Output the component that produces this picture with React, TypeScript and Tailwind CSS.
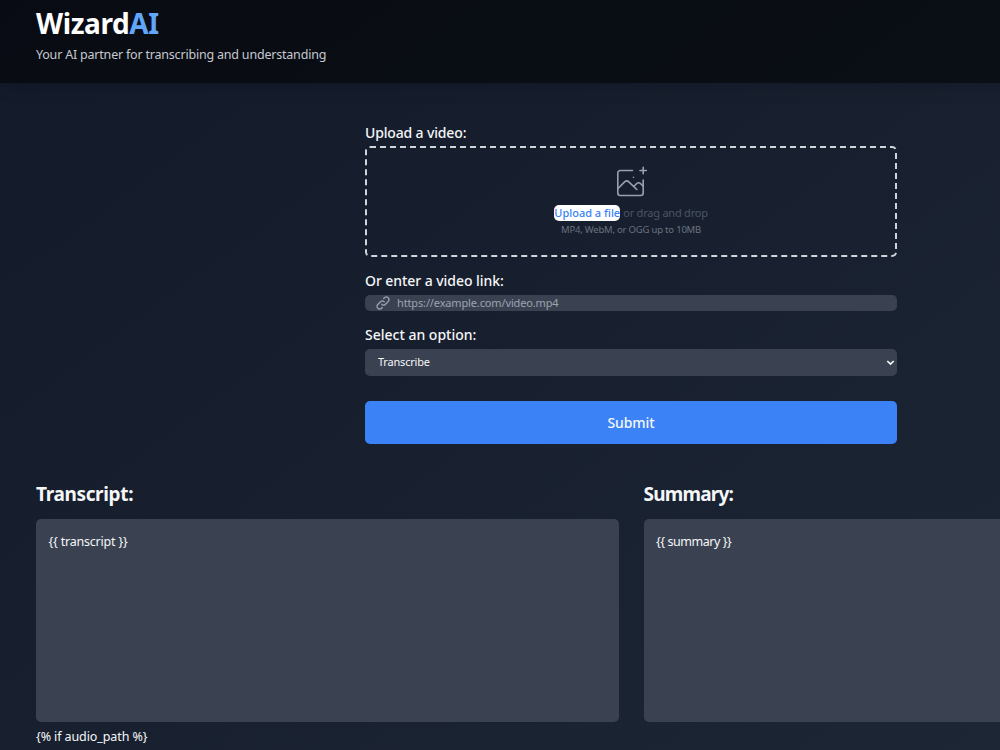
import { useState } from "react";

const ImagePlusIcon: React.FC = () => (
  <svg
    className="h-8 w-8 text-gray-400"
    viewBox="0 0 32 32"
    fill="none"
    stroke="currentColor"
    strokeWidth="1.6"
    strokeLinecap="round"
    strokeLinejoin="round"
  >
    <path d="M17.5 4.5H5.3a2.5 2.5 0 0 0-2.5 2.5v20a2.5 2.5 0 0 0 2.5 2.5h20.4a2.5 2.5 0 0 0 2.5-2.5V14" />
    <path d="M25 4.5h6.4M28.2 1.2v6.6" />
    <path d="M2.8 22.7l6.8-6.8a3 3 0 0 1 4.2 0l8 7.6M19 20.3l2.5-2.5a3 3 0 0 1 4.2 0l2.5 2.5" />
    <path d="M18.5 11.2h.01" />
  </svg>
);

const LinkIcon: React.FC = () => (
  <svg
    className="ml-[10px] h-4 w-4 shrink-0 text-gray-400"
    viewBox="0 0 24 24"
    fill="none"
    stroke="currentColor"
    strokeWidth="2"
    strokeLinecap="round"
    strokeLinejoin="round"
  >
    <path d="M13.828 10.172a4 4 0 00-5.656 0l-4 4a4 4 0 105.656 5.656l1.102-1.101m-.758-4.899a4 4 0 005.656 0l4-4a4 4 0 00-5.656-5.656l-1.1 1.1" />
  </svg>
);

const panels = [
  { title: "Transcript:", body: "{{ transcript }}", titleClass: "tracking-[-0.35px]", bodyClass: "tracking-[-0.2px]" },
  { title: "Summary:", body: "{{ summary }}", titleClass: "tracking-[-0.8px]", bodyClass: "tracking-[-0.45px]" },
];

const App: React.FC = () => {
  const [link, setLink] = useState<string>("");
  const [option, setOption] = useState<string>("transcribe");

  return (
    <div className="h-[750px] w-full overflow-hidden font-['Noto_Sans',sans-serif] text-[#f5f6f8]">
      <div className="h-[950px] w-[1262px] bg-linear-to-br/srgb from-[#131a2a] to-[#1f2937]">
        <header className="h-[83px] bg-black/55 px-9 pt-[6px] shadow-lg">
          <h1 className="text-[28px] leading-[34px] font-bold tracking-[-0.4px] text-white">
            Wizard<span className="text-[#60a5fa]">AI</span>
          </h1>
          <p className="mt-[6px] text-[12.5px] leading-[18px] tracking-[-0.2px] text-[#c5c9d0]">
            Your AI partner for transcribing and understanding
          </p>
        </header>

        <form className="mx-auto mt-[39px] flex w-[532px] flex-col" onSubmit={(e) => e.preventDefault()}>
          <label className="text-[14px] leading-[21px] font-medium tracking-[-0.15px]">Upload a video:</label>
          <div className="mt-[3px] flex h-[111px] flex-col items-center rounded-[5px] border-2 border-dashed border-[#d1d5db] pt-[18px]">
            <ImagePlusIcon />
            <div className="mt-[7px] flex items-center text-[11px] leading-4 text-[#4b5563]">
              <span className="rounded-[5px] bg-white font-medium text-[#3b82f6]">Upload a file</span>
              <p className="pl-[3px] tracking-[-0.22px]">or drag and drop</p>
            </div>
            <p className="mt-[2px] text-[9.5px] leading-[13px] tracking-[-0.2px] text-[#6b7280]">
              MP4, WebM, or OGG up to 10MB
            </p>
          </div>

          <label className="mt-[14px] text-[14px] leading-5 font-medium tracking-[-0.06px]">Or enter a video link:</label>
          <div className="mt-1 flex h-4 items-center rounded-[5px] bg-[#3a4252]">
            <LinkIcon />
            <input
              type="text"
              value={link}
              onChange={(e) => setLink(e.target.value)}
              placeholder="https://example.com/video.mp4"
              className="ml-[6px] h-4 flex-1 bg-transparent text-[11px] leading-4 tracking-[-0.14px] outline-none placeholder:text-[#9ca3af]"
            />
          </div>

          <label className="mt-[14px] text-[14px] leading-5 font-medium">Select an option:</label>
          <div className="mt-1 flex h-[27px] items-center rounded-[5px] bg-[#3a4252] pr-[2px]">
            <select
              value={option}
              onChange={(e) => setOption(e.target.value)}
              className="h-[27px] flex-1 appearance-none pl-[13px] text-[11px] tracking-[-0.2px] outline-none"
            >
              <option value="transcribe">Transcribe</option>
              <option value="summarize">Summarize</option>
            </select>
            <svg className="h-[9px] w-[9px]" viewBox="0 0 9 9" fill="none" stroke="currentColor" strokeWidth="1.7">
              <path d="M1.3 3l3.2 3.1L7.7 3" />
            </svg>
          </div>

          <button className="mt-[25px] h-[43px] rounded-[5px] bg-[#3b82f6] text-[14px] font-medium tracking-[-0.1px]">
            Submit
          </button>
        </form>

        <div className="mt-[38px] grid grid-cols-2 gap-[25px] px-9">
          {panels.map((panel) => (
            <section key={panel.title}>
              <h2 className={`text-[19px] leading-6 font-bold ${panel.titleClass}`}>{panel.title}</h2>
              <div
                className={`mt-[13px] h-[203px] rounded-[5px] bg-[#3a4252] px-[12.5px] pt-[13px] text-[12.5px] leading-[19px] ${panel.bodyClass}`}
              >
                {panel.body}
              </div>
            </section>
          ))}
        </div>
        <p className="mt-[5px] px-9 text-[12.5px] leading-[19px] tracking-[-0.1px]">{"{% if audio_path %}"}</p>
      </div>
    </div>
  );
};

export default App;
